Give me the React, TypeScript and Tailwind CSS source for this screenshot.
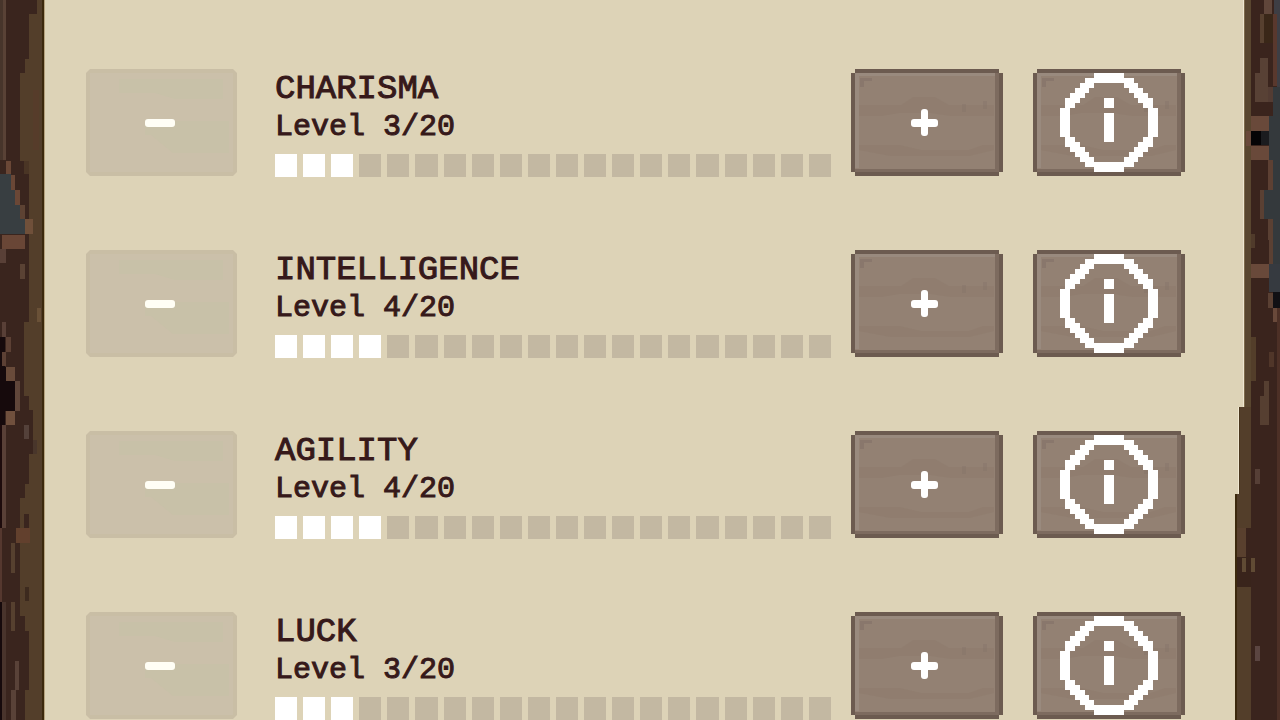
type Stat = { name: string; level: number };
type Patch = [x: number, y: number, width: number, height: number, color: string];

const MAX_LEVEL = 20;

const STATS: Stat[] = [
  { name: "CHARISMA", level: 3 },
  { name: "INTELLIGENCE", level: 4 },
  { name: "AGILITY", level: 4 },
  { name: "LUCK", level: 3 },
];

const LEFT_BARK: Patch[] = [
  [0, 0, 45, 720, "#3a251e"],
  [0, 0, 3, 160, "#47352b"],
  [3, 0, 3, 160, "#594236"],
  [29, 14, 14, 226, "#533e2a"],
  [37, 0, 6, 14, "#533e2a"],
  [25, 59, 4, 102, "#533e2a"],
  [20, 73, 5, 88, "#533e2a"],
  [33, 90, 6, 60, "#563c2a"],
  [24, 161, 5, 13, "#4a3525"],
  [0, 174, 11, 60, "#383e41"],
  [11, 190, 5, 44, "#383e41"],
  [16, 205, 4, 29, "#383e41"],
  [20, 219, 5, 15, "#383e41"],
  [6, 161, 5, 13, "#6a4736"],
  [11, 175, 4, 15, "#6a4736"],
  [15, 190, 5, 15, "#6a4736"],
  [20, 205, 5, 14, "#5d4233"],
  [25, 219, 8, 15, "#70503a"],
  [2, 235, 23, 14, "#694636"],
  [0, 249, 6, 14, "#594037"],
  [20, 264, 5, 15, "#5a4234"],
  [29, 234, 14, 88, "#533e2a"],
  [24, 322, 19, 74, "#533e2a"],
  [29, 396, 14, 14, "#533e2a"],
  [33, 410, 10, 44, "#533e2a"],
  [29, 454, 14, 30, "#533e2a"],
  [37, 308, 4, 14, "#6a5137"],
  [2, 322, 4, 15, "#594037"],
  [0, 337, 5, 88, "#160a0c"],
  [5, 367, 10, 44, "#160a0c"],
  [6, 337, 5, 15, "#5c4034"],
  [2, 352, 4, 14, "#5c4034"],
  [6, 367, 9, 14, "#694b3a"],
  [15, 381, 5, 30, "#60463a"],
  [6, 411, 9, 14, "#70503d"],
  [24, 425, 5, 14, "#54413a"],
  [33, 440, 4, 14, "#49362b"],
  [0, 425, 2, 103, "#1d0b0c"],
  [2, 425, 4, 103, "#594037"],
  [25, 484, 18, 236, "#533e2a"],
  [20, 498, 5, 118, "#533e2a"],
  [24, 514, 5, 14, "#3a251e"],
  [16, 528, 14, 15, "#62402d"],
  [11, 543, 4, 30, "#56402f"],
  [25, 587, 4, 14, "#3d2a1e"],
  [0, 528, 2, 74, "#55382f"],
  [0, 602, 2, 118, "#160a0c"],
  [2, 602, 4, 118, "#49342c"],
  [11, 602, 4, 29, "#56402f"],
  [20, 616, 5, 15, "#3a251e"],
  [24, 631, 5, 59, "#3a251e"],
  [15, 661, 4, 29, "#594238"],
  [11, 690, 5, 30, "#594238"],
  [42, 0, 2, 720, "#3c290d"],
  [44, 0, 1, 720, "#b5a27d"],
];

// Drawn on a 45px strip whose upper left corner is still parchment.
const RIGHT_BARK: Patch[] = [
  [0, 0, 45, 720, "#3a241d"],
  [0, 0, 9, 407, "#ddd3b7"],
  [0, 407, 4, 87, "#ddd3b7"],
  [9, 0, 2, 407, "#58452f"],
  [11, 0, 5, 407, "#59462f"],
  [16, 0, 20, 116, "#3a241d"],
  [29, 0, 8, 14, "#60463a"],
  [25, 14, 4, 29, "#57402f"],
  [29, 14, 10, 29, "#3a2718"],
  [39, 0, 6, 14, "#3e3e44"],
  [42, 14, 3, 73, "#3e3e44"],
  [38, 14, 4, 72, "#59382d"],
  [25, 58, 8, 15, "#584135"],
  [20, 73, 13, 29, "#584135"],
  [33, 87, 12, 15, "#533c33"],
  [38, 87, 7, 180, "#34393c"],
  [34, 116, 11, 74, "#34393c"],
  [16, 116, 18, 15, "#69493a"],
  [11, 131, 5, 15, "#69493a"],
  [16, 131, 10, 14, "#050406"],
  [26, 131, 8, 14, "#1b1c1f"],
  [16, 146, 18, 14, "#69493a"],
  [33, 160, 5, 30, "#5d4033"],
  [29, 190, 16, 30, "#34393c"],
  [25, 190, 4, 29, "#5a4033"],
  [33, 219, 5, 21, "#5a4033"],
  [29, 219, 4, 15, "#3a241d"],
  [16, 234, 4, 14, "#503b2b"],
  [34, 240, 4, 24, "#5a4033"],
  [16, 264, 18, 14, "#69493a"],
  [34, 264, 11, 28, "#363a40"],
  [33, 293, 5, 15, "#5a4033"],
  [38, 292, 7, 16, "#111014"],
  [38, 308, 5, 14, "#69493a"],
  [42, 308, 3, 412, "#4d3026"],
  [16, 337, 5, 44, "#533e2a"],
  [34, 352, 5, 15, "#503629"],
  [29, 381, 5, 15, "#563f31"],
  [25, 396, 9, 29, "#563f31"],
  [4, 407, 12, 87, "#533e2a"],
  [20, 469, 5, 15, "#563f36"],
  [0, 494, 16, 34, "#533e2a"],
  [2, 528, 9, 29, "#59402e"],
  [2, 557, 14, 30, "#39241b"],
  [7, 558, 4, 14, "#604b34"],
  [16, 558, 4, 14, "#604b34"],
  [2, 587, 14, 133, "#533e2a"],
  [20, 646, 5, 15, "#5b4541"],
  [8, 0, 1, 407, "#efe7d1"],
  [9, 0, 1, 407, "#7e6b4c"],
  [3, 407, 1, 87, "#efe7d1"],
  [4, 407, 1, 87, "#4a371e"],
  [0, 494, 2, 226, "#3c290d"],
];

// 20x20 pixel-art "i" in a circle.
const INFO_PIXELS = [
  ".......######.......",
  ".....##########.....",
  "....###......###....",
  "...###........###...",
  "..###..........###..",
  ".###.....##.....###.",
  ".##......##......##.",
  "##................##",
  "##.......##.......##",
  "##.......##.......##",
  "##.......##.......##",
  "##.......##.......##",
  "##.......##.......##",
  ".##......##......##.",
  ".###............###.",
  "..###..........###..",
  "...###........###...",
  "....###......###....",
  ".....##########.....",
  ".......######.......",
];

const INFO_PATH = INFO_PIXELS.flatMap((row, y) =>
  [...row].map((pixel, x) => (pixel === "#" ? `M${x} ${y}h1v1h-1z` : "")),
).join("");

function Bark({ patches }: { patches: Patch[] }) {
  return (
    <svg
      aria-hidden="true"
      className="w-[45px] shrink-0 self-stretch"
      viewBox="0 0 45 720"
      preserveAspectRatio="none"
      shapeRendering="crispEdges"
    >
      {patches.map(([x, y, width, height, color], i) => (
        <rect key={i} x={x} y={y} width={width} height={height} fill={color} />
      ))}
    </svg>
  );
}

function WoodFace() {
  return (
    <>
      <path d="M4 0H148V4H152V103H148V107H4V103H0V4H4Z" fill="#6c5b50" />
      <rect x="4" y="4" width="144" height="99" fill="#938173" />
      <path d="M4 4H144V7H8V99H4Z" fill="#998a7e" />
      <path d="M144 4H148V103H4V100H144Z" fill="#7d6b5f" />
      <path d="M8 36H50L62 28H84L98 36H143V47H100L80 44H48L30 47H8Z" fill="#8e7a6c" opacity=".5" />
      <path d="M8 76H48L70 81H118L132 76H143V81L118 87H40L8 81Z" fill="#8b776a" opacity=".4" />
      <path d="M9 9H21V12H13V18H9Z" fill="#85746a" opacity=".7" />
      <path d="M111 35H115V43H111ZM132 32H136V40H132Z" fill="#84736a" opacity=".4" />
    </>
  );
}

function MinusButton({ name }: { name: string }) {
  return (
    <button type="button" disabled aria-label={`Lower ${name}`} className="mr-[38px] h-27 w-38 shrink-0">
      <svg viewBox="0 0 152 108" className="size-full">
        <path d="M5 0H148L152 4V103L148 107H5L1 103V4Z" fill="#c9bea5" />
        <path d="M5 4H148V103H5Z" fill="#cbc0aa" />
        <path d="M34 10H138V30H90L70 24H34ZM60 52H144V84H88L66 66H60Z" fill="#c8c1a8" />
        <rect x="60" y="50" width="30" height="8" rx="3" fill="#fffef5" />
      </svg>
    </button>
  );
}

function PlusButton({ name }: { name: string }) {
  return (
    <button type="button" aria-label={`Raise ${name}`} className="ml-5 h-27 w-38 shrink-0 cursor-pointer">
      <svg viewBox="0 0 152 108" className="size-full">
        <WoodFace />
        <rect x="60" y="50" width="27" height="8" rx="3" fill="#fff" />
        <rect x="70" y="40" width="7" height="27" rx="3" fill="#fff" />
      </svg>
    </button>
  );
}

function InfoButton({ name }: { name: string }) {
  return (
    <button type="button" aria-label={`About ${name}`} className="ml-[30px] h-27 w-38 shrink-0 cursor-pointer">
      <svg viewBox="0 0 152 108" className="size-full">
        <WoodFace />
        <svg x="27" y="4" width="98" height="99" viewBox="0 0 20 20" preserveAspectRatio="none" shapeRendering="crispEdges">
          <path d={INFO_PATH} fill="#fff" />
        </svg>
      </svg>
    </button>
  );
}

function StatRow({ stat }: { stat: Stat }) {
  return (
    <li className="flex items-start">
      <MinusButton name={stat.name} />
      <div className="min-w-0 flex-1 text-[#36191a]">
        <h2 className="text-[34px] leading-10 [-webkit-text-stroke:1px_#36191a]">{stat.name}</h2>
        <p className="text-[30px] leading-9 [-webkit-text-stroke:1px_#36191a]">
          Level {stat.level}/{MAX_LEVEL}
        </p>
        <div
          role="meter"
          aria-label={`${stat.name} level`}
          aria-valuemin={0}
          aria-valuemax={MAX_LEVEL}
          aria-valuenow={stat.level}
          className="mt-[9px] flex gap-1.5"
        >
          {Array.from({ length: MAX_LEVEL }, (_, i) => (
            <span key={i} className={`h-[23px] flex-1 ${i < stat.level ? "bg-white" : "bg-[#c3b8a2]"}`} />
          ))}
        </div>
      </div>
      <PlusButton name={stat.name} />
      <InfoButton name={stat.name} />
    </li>
  );
}

export default function App() {
  return (
    <div className="flex min-h-screen bg-[#ddd3b7] font-['Liberation_Mono',monospace]">
      <Bark patches={LEFT_BARK} />
      <main className="min-w-0 flex-1 pt-[69px] pr-[50px] pl-10">
        <ul className="flex flex-col gap-[73px]">
          {STATS.map((stat) => (
            <StatRow key={stat.name} stat={stat} />
          ))}
        </ul>
      </main>
      <Bark patches={RIGHT_BARK} />
    </div>
  );
}
